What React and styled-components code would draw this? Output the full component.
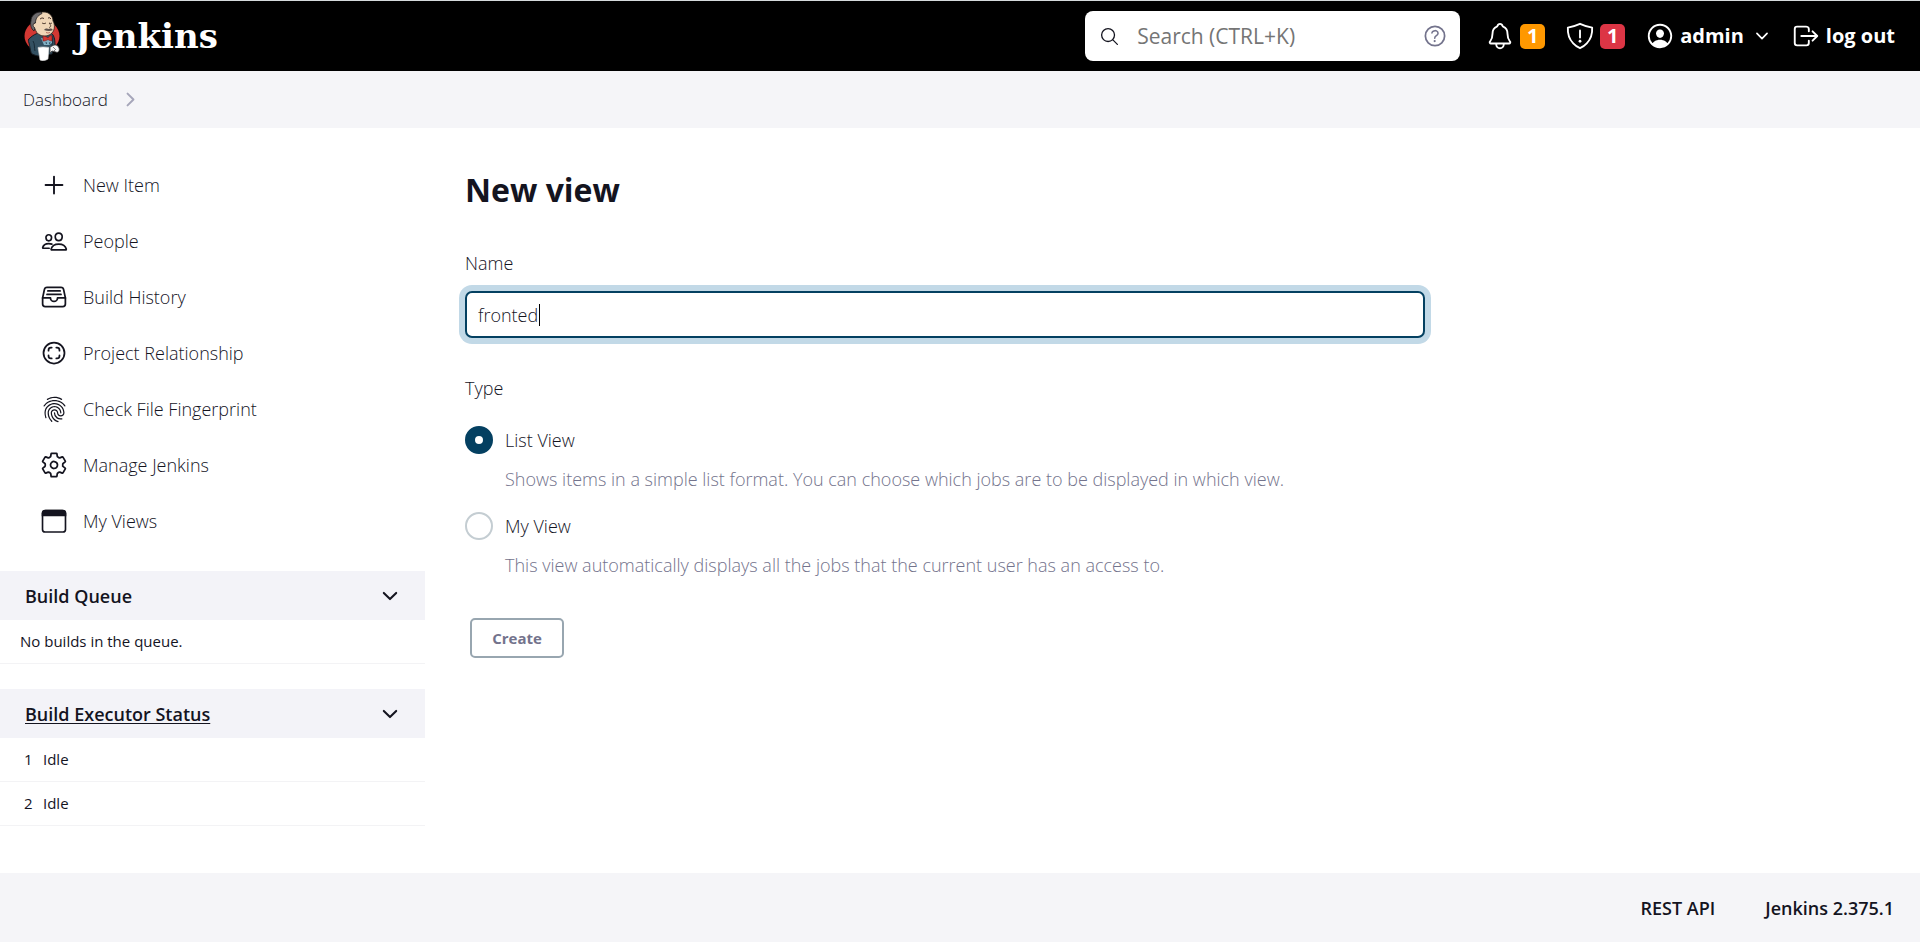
import React, { useLayoutEffect, useRef, useState } from 'react';
import styled, { createGlobalStyle } from 'styled-components';
import {
  IoAddOutline,
  IoPeopleOutline,
  IoFileTrayFullOutline,
  IoFingerPrintOutline,
  IoSettingsOutline,
  IoSearchOutline,
  IoHelpCircleOutline,
  IoNotificationsOutline,
  IoPersonCircleOutline,
  IoChevronDownOutline,
  IoChevronForwardOutline,
  IoLogOutOutline,
} from 'react-icons/io5';

const GlobalStyle = createGlobalStyle`
  *, *::before, *::after { box-sizing: border-box; }
  body {
    margin: 0;
    background: #fff;
    color: #14141f;
    font-family: "Open Sans", "Noto Sans", sans-serif;
    font-size: 18px;
    font-weight: 350;
    line-height: 28px;
  }
  a { color: inherit; text-decoration: none; }
  button, input { font: inherit; color: inherit; }
  svg { display: block; flex: none; }
`;

const Page = styled.div`
  display: flex;
  flex-direction: column;
  min-height: 100vh;
`;

const Header = styled.header`
  display: flex;
  align-items: center;
  height: 71px;
  padding: 0 25px 0 24px;
  border-top: 1px solid #d5dadc;
  background: #000;
  color: #fff;
`;

const Brand = styled.a`
  display: flex;
  align-items: center;
  gap: 15px;
  margin-right: auto;
  font-family: "DejaVu Serif", serif;
  font-size: 34px;
  font-weight: 700;
  line-height: 40px;
`;

const SearchBox = styled.div`
  display: flex;
  align-items: center;
  gap: 17px;
  width: 375px;
  height: 50px;
  margin-right: 25px;
  padding: 0 11px 0 14px;
  border-radius: 8px;
  background: #fff;
  color: #14141f;
`;

const SearchInput = styled.input`
  flex: 1;
  min-width: 0;
  padding: 0;
  border: 0;
  outline: 0;
  background: none;
  font-size: 21px;
  font-weight: 400;
  &::placeholder { color: #757575; opacity: 1; }
`;

const HelpLink = styled.a`
  color: #73738c;
`;

const HeaderNav = styled.nav`
  display: flex;
  align-items: center;
  gap: 20px;
  font-size: 20px;
  font-weight: 700;
`;

const HeaderLink = styled.a`
  display: flex;
  align-items: center;
  gap: 5px;
`;

const UserMenu = styled.div`
  display: flex;
  align-items: center;
  gap: 9px;
`;

const Badge = styled.span`
  width: 25px;
  height: 25px;
  border-radius: 5px;
  background: ${(p) => p.$color};
  line-height: 24px;
  text-align: center;
`;

const MenuButton = styled.button`
  display: flex;
  padding: 0;
  border: 0;
  background: none;
`;

const Breadcrumbs = styled.nav`
  display: flex;
  align-items: center;
  gap: 12px;
  height: 57px;
  padding: 0 23px;
  background: #f5f5f8;
  font-size: 17px;
  svg { color: #a6a6ba; }
`;

const Body = styled.div`
  display: flex;
  flex: 1;
`;

const Sidebar = styled.aside`
  flex: none;
  width: 425px;
`;

const Tasks = styled.nav`
  display: flex;
  flex-direction: column;
  padding: 29px 0 22px;
`;

const TaskLink = styled.a`
  display: grid;
  grid-template-columns: 30px 1fr;
  align-items: center;
  gap: 14px;
  height: 56px;
  padding: 0 39px;
  svg { justify-self: center; }
`;

const Pane = styled.section`
  margin-bottom: 25px;
`;

const PaneHeader = styled.div`
  display: flex;
  align-items: center;
  justify-content: space-between;
  height: 49px;
  padding: 0 24px 0 25px;
  background: #f3f3f8;
`;

const PaneTitle = styled.h2`
  margin: 0;
  font-size: 18px;
  font-weight: 600;
  line-height: 28px;
  a { text-decoration: underline; text-underline-offset: 2px; }
`;

const PaneTable = styled.table`
  width: 100%;
  border-spacing: 0;
  font-size: 15px;
  font-weight: 400;
  line-height: 20px;
  td {
    height: 44px;
    padding: 0 0 2px 20px;
    border-bottom: 1px solid #f3f3f5;
  }
`;

const NumberCell = styled.td`
  && { width: 43px; padding-left: 24px; }
  && + td { padding-left: 0; }
`;

const Main = styled.main`
  flex: 1;
  min-width: 0;
  padding: 40px;
`;

const Title = styled.h1`
  margin: 0 0 37px;
  font-size: 32px;
  font-weight: 700;
  line-height: 44px;
`;

const Form = styled.form`
  max-width: 960px;
`;

const FieldLabel = styled.label`
  display: block;
  margin-bottom: 14px;
`;

const InputWrap = styled.div`
  position: relative;
  margin-bottom: 36px;
`;

const TextInput = styled.input`
  display: block;
  width: 100%;
  height: 47px;
  padding: 0 11px;
  border: 2px solid #044061;
  border-radius: 7px;
  outline: 0;
  box-shadow: 0 0 0 6px #c2d9e7;
  caret-color: transparent;
`;

const Caret = styled.span`
  position: absolute;
  top: 13px;
  width: 1px;
  height: 22px;
  background: #000;
  pointer-events: none;
`;

const TypeGroup = styled.fieldset`
  margin: 0;
  padding: 0;
  border: 0;
`;

const Legend = styled.legend`
  padding: 0;
  margin-bottom: 24px;
`;

const Option = styled.div`
  display: grid;
  grid-template-columns: 28px 1fr;
  gap: 11px 12px;
  margin-bottom: 19px;
`;

const Radio = styled.input`
  appearance: none;
  width: 28px;
  height: 28px;
  margin: 0;
  border: 2px solid #c4cdd2;
  border-radius: 50%;
  background: #fff;
  &:checked { border: 10px solid #044061; }
`;

const OptionHelp = styled.div`
  grid-column: 2;
  color: #73738c;
`;

const CreateButton = styled.button`
  width: 94px;
  height: 40px;
  margin: 20px 5px 0;
  padding: 0;
  border: 2px solid #98a6b0;
  border-radius: 5px;
  background: #fff;
  color: #73738c;
  font-size: 15px;
  font-weight: 700;
  line-height: 20px;
`;

const Footer = styled.footer`
  display: flex;
  align-items: center;
  justify-content: flex-end;
  gap: 50px;
  height: 69px;
  padding: 0 26px;
  background: #f5f5f8;
  font-weight: 600;
`;

function ButlerLogo() {
  return (
    <svg width="36" height="50" viewBox="0 0 36 50" aria-hidden="true">
      <ellipse cx="18" cy="25" rx="17.5" ry="16" fill="#d33833" />
      <path d="M6 27 C9 24 12 23 14 22 L27 22 C30 24 31 28 31 34 L28 43 L14 45 C10 44 7 43 7 41 C6 38 6 36 5 32 C4 30 4 28 6 27Z" fill="#335061" stroke="#161b22" strokeWidth="1" />
      <path d="M9 30 C11 33 10 37 11 40 M28 25 C29 29 28 32 28 36" fill="none" stroke="#182b38" strokeWidth="1" />
      <path d="M11 8 C12 3 16 1 20 1 C25 1 29 5 29 10 C31 13 31 19 28 22 C25 25 20 26 16 24 C13 23 12 20 11 18 C8 17 7 13 11 12Z" fill="#f0d6b7" stroke="#2c2420" strokeWidth="0.8" />
      <path d="M17 1 C11 1 7 5 7 10 C6 13 7 18 10 20 L11 17 C8 15 9 12 11.500 12 C11.500 8 13 5 18 2.500Z" fill="#6d6b6d" stroke="#231f20" strokeWidth="0.8" />
      <path d="M16 8 Q18 6 20 7.500 M24 7 Q26 6 27 8" fill="none" stroke="#4a352a" strokeWidth="1" />
      <path d="M18 12 Q20 13.500 22 12 M25 12 Q27 13 28 12 M25 12 C27 14 27.500 16 25 16.500" fill="none" stroke="#4a352a" strokeWidth="0.9" />
      <path d="M20 19 C22 16.500 24 18 25 18 C27 17 28 18 29 19 C26 20.500 23 20 20 19Z" fill="#5c504c" />
      <path d="M22 21.500 Q24 22.500 26 21.500" fill="none" stroke="#b05a50" strokeWidth="0.8" />
      <path d="M17 27 L23 28 L28 27 L28 32 L25 34 L20 34Z" fill="#81b0c4" />
      <path d="M19 25 C21 25 23 26 24 27 C25 25 27 24 28 25 L28 30 C26 30 25 29 24 28.500 C22 30 20 30 19 30Z" fill="#d33833" stroke="#7e1717" strokeWidth="0.6" />
      <path d="M22 31 L22.500 33 M26 31 L25.500 33" stroke="#1d3647" strokeWidth="0.8" />
      <path d="M14 36.500 C18 35.500 22 36 25 36.500 L24 48 C21 50 18 50 16 49Z" fill="#fff" stroke="#d7d7d7" strokeWidth="0.6" />
      <path d="M28 35 C31 33 34 34 35 37 C36 40 34 42 32 41 L28 40 L26 42 L26 36Z" fill="#f7f7f7" stroke="#3b3b3b" strokeWidth="0.8" />
      <path d="M29 36 L31 38 M30 40 L32 38" stroke="#666" strokeWidth="0.8" />
    </svg>
  );
}

function ShieldAlertIcon() {
  return (
    <svg width="30" height="30" viewBox="0 0 512 512" fill="none" stroke="currentColor" strokeWidth="32" strokeLinecap="round" strokeLinejoin="round" aria-hidden="true">
      <path d="M463.1 112.37C373.68 96.33 336.71 84.45 256 48c-80.71 36.45-117.68 48.33-207.1 64.37C32.7 369.13 240.58 457.79 256 464c15.42-6.21 223.3-94.87 207.1-351.63z" />
      <path d="M256 160v122" />
      <circle cx="256" cy="346" r="24" fill="currentColor" stroke="none" />
    </svg>
  );
}

function RelationshipIcon({ size }) {
  return (
    <svg width={size} height={size} viewBox="0 0 512 512" fill="none" stroke="currentColor" strokeWidth="32" strokeLinecap="round" strokeLinejoin="round" aria-hidden="true">
      <circle cx="256" cy="256" r="192" />
      <path d="M214 156h-14a44 44 0 0 0-44 44v14M298 156h14a44 44 0 0 1 44 44v14M214 356h-14a44 44 0 0 1-44-44v-14M298 356h14a44 44 0 0 0 44-44v-14" />
    </svg>
  );
}

function WindowIcon({ size }) {
  return (
    <svg width={size} height={size} viewBox="0 0 512 512" aria-hidden="true">
      <rect x="60" y="76" width="392" height="368" rx="44" fill="none" stroke="currentColor" strokeWidth="28" />
      <path d="M397 62H115c-38 0-69 30-69 66v46h420v-46c0-36-31-66-69-66z" fill="currentColor" />
    </svg>
  );
}

const tasks = [
  { label: 'New Item', Icon: IoAddOutline, size: 30 },
  { label: 'People', Icon: IoPeopleOutline, size: 27 },
  { label: 'Build History', Icon: IoFileTrayFullOutline, size: 28 },
  { label: 'Project Relationship', Icon: RelationshipIcon, size: 28 },
  { label: 'Check File Fingerprint', Icon: IoFingerPrintOutline, size: 27 },
  { label: 'Manage Jenkins', Icon: IoSettingsOutline, size: 28 },
  { label: 'My Views', Icon: WindowIcon, size: 30 },
];

const viewTypes = [
  {
    id: 'list',
    label: 'List View',
    help: 'Shows items in a simple list format. You can choose which jobs are to be displayed in which view.',
  },
  {
    id: 'my',
    label: 'My View',
    help: 'This view automatically displays all the jobs that the current user has an access to.',
  },
];

function NameField({ id, value, onChange }) {
  const input = useRef(null);
  const [caretX, setCaretX] = useState(0);

  // Keeps the caret line at the end of the typed text.
  useLayoutEffect(() => {
    const style = getComputedStyle(input.current);
    const context = document.createElement('canvas').getContext('2d');
    context.font = `${style.fontWeight} ${style.fontSize} ${style.fontFamily}`;
    const start = parseInt(style.paddingLeft, 10) + parseInt(style.borderLeftWidth, 10);
    setCaretX(start + Math.ceil(context.measureText(value).width));
  }, [value]);

  return (
    <InputWrap>
      <TextInput ref={input} id={id} type="text" autoFocus value={value} onChange={onChange} />
      <Caret style={{ left: caretX }} aria-hidden="true" />
    </InputWrap>
  );
}

export default function App() {
  const [name, setName] = useState('fronted');
  const [type, setType] = useState('list');

  return (
    <Page>
      <GlobalStyle />
      <Header>
        <Brand href="#">
          <ButlerLogo />
          Jenkins
        </Brand>
        <SearchBox role="search">
          <IoSearchOutline size={21} />
          <SearchInput type="text" placeholder="Search (CTRL+K)" aria-label="Search" />
          <HelpLink href="#" aria-label="Search help">
            <IoHelpCircleOutline size={28} />
          </HelpLink>
        </SearchBox>
        <HeaderNav>
          <HeaderLink href="#" aria-label="Notifications">
            <IoNotificationsOutline size={30} />
            <Badge $color="#ff9800">1</Badge>
          </HeaderLink>
          <HeaderLink href="#" aria-label="Security warnings">
            <ShieldAlertIcon />
            <Badge $color="#dc3545">1</Badge>
          </HeaderLink>
          <UserMenu>
            <HeaderLink href="#">
              <IoPersonCircleOutline size={30} />
              admin
            </HeaderLink>
            <MenuButton type="button" aria-label="User menu">
              <IoChevronDownOutline size={18} />
            </MenuButton>
          </UserMenu>
          <HeaderLink href="#">
            <IoLogOutOutline size={30} />
            log out
          </HeaderLink>
        </HeaderNav>
      </Header>
      <Breadcrumbs aria-label="Breadcrumb">
        <a href="#">Dashboard</a>
        <IoChevronForwardOutline size={21} />
      </Breadcrumbs>
      <Body>
        <Sidebar>
          <Tasks>
            {tasks.map(({ label, Icon, size }) => (
              <TaskLink href="#" key={label}>
                <Icon size={size} />
                {label}
              </TaskLink>
            ))}
          </Tasks>
          <Pane>
            <PaneHeader>
              <PaneTitle>Build Queue</PaneTitle>
              <MenuButton type="button" aria-label="Collapse build queue">
                <IoChevronDownOutline size={22} />
              </MenuButton>
            </PaneHeader>
            <PaneTable>
              <tbody>
                <tr>
                  <td>No builds in the queue.</td>
                </tr>
              </tbody>
            </PaneTable>
          </Pane>
          <Pane>
            <PaneHeader>
              <PaneTitle>
                <a href="#">Build Executor Status</a>
              </PaneTitle>
              <MenuButton type="button" aria-label="Collapse executor status">
                <IoChevronDownOutline size={22} />
              </MenuButton>
            </PaneHeader>
            <PaneTable>
              <tbody>
                {[1, 2].map((n) => (
                  <tr key={n}>
                    <NumberCell>{n}</NumberCell>
                    <td>Idle</td>
                  </tr>
                ))}
              </tbody>
            </PaneTable>
          </Pane>
        </Sidebar>
        <Main>
          <Title>New view</Title>
          <Form onSubmit={(e) => e.preventDefault()}>
            <FieldLabel htmlFor="view-name">Name</FieldLabel>
            <NameField id="view-name" value={name} onChange={(e) => setName(e.target.value)} />
            <TypeGroup>
              <Legend>Type</Legend>
              {viewTypes.map((v) => (
                <Option key={v.id}>
                  <Radio
                    type="radio"
                    name="type"
                    id={`type-${v.id}`}
                    aria-describedby={`help-${v.id}`}
                    checked={type === v.id}
                    onChange={() => setType(v.id)}
                  />
                  <label htmlFor={`type-${v.id}`}>{v.label}</label>
                  <OptionHelp id={`help-${v.id}`}>{v.help}</OptionHelp>
                </Option>
              ))}
            </TypeGroup>
            <CreateButton type="submit">Create</CreateButton>
          </Form>
        </Main>
      </Body>
      <Footer>
        <a href="#">REST API</a>
        <a href="#">Jenkins 2.375.1</a>
      </Footer>
    </Page>
  );
}
